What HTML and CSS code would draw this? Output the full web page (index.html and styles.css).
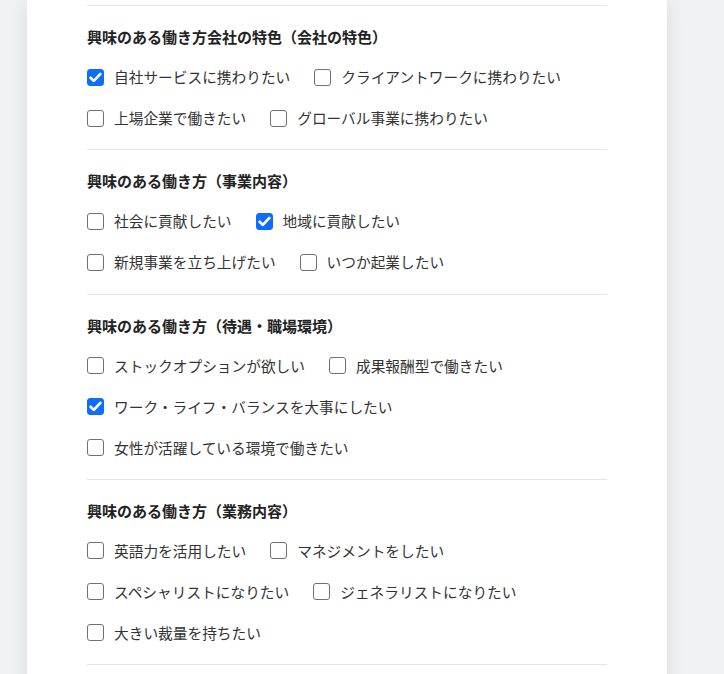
FILE: index.html
```html
<!DOCTYPE html>
<html lang="ja">
<head>
<meta charset="utf-8">
<link rel="stylesheet" href="styles.css">
</head>
<body>
<div class="page">
  <div class="card">
    <section class="group">
      <h3 class="title">興味のある働き方会社の特色（会社の特色）</h3>
      <div class="options">
        <div class="row">
          <label class="opt"><span class="box on"><svg viewBox="0 0 17 17"><path d="M3.6 8.7l3.2 3.2 6.6-7" /></svg></span>自社サービスに携わりたい</label>
          <label class="opt"><span class="box"></span>クライアントワークに携わりたい</label>
        </div>
        <div class="row">
          <label class="opt"><span class="box"></span>上場企業で働きたい</label>
          <label class="opt"><span class="box"></span>グローバル事業に携わりたい</label>
        </div>
      </div>
    </section>
    <section class="group">
      <h3 class="title">興味のある働き方（事業内容）</h3>
      <div class="options">
        <div class="row">
          <label class="opt"><span class="box"></span>社会に貢献したい</label>
          <label class="opt"><span class="box on"><svg viewBox="0 0 17 17"><path d="M3.6 8.7l3.2 3.2 6.6-7" /></svg></span>地域に貢献したい</label>
        </div>
        <div class="row">
          <label class="opt"><span class="box"></span>新規事業を立ち上げたい</label>
          <label class="opt"><span class="box"></span>いつか起業したい</label>
        </div>
      </div>
    </section>
    <section class="group">
      <h3 class="title">興味のある働き方（待遇・職場環境）</h3>
      <div class="options">
        <div class="row">
          <label class="opt"><span class="box"></span>ストックオプションが欲しい</label>
          <label class="opt"><span class="box"></span>成果報酬型で働きたい</label>
        </div>
        <div class="row">
          <label class="opt"><span class="box on"><svg viewBox="0 0 17 17"><path d="M3.6 8.7l3.2 3.2 6.6-7" /></svg></span>ワーク・ライフ・バランスを大事にしたい</label>
        </div>
        <div class="row">
          <label class="opt"><span class="box"></span>女性が活躍している環境で働きたい</label>
        </div>
      </div>
    </section>
    <section class="group">
      <h3 class="title">興味のある働き方（業務内容）</h3>
      <div class="options">
        <div class="row">
          <label class="opt"><span class="box"></span>英語力を活用したい</label>
          <label class="opt"><span class="box"></span>マネジメントをしたい</label>
        </div>
        <div class="row">
          <label class="opt"><span class="box"></span>スペシャリストになりたい</label>
          <label class="opt"><span class="box"></span>ジェネラリストになりたい</label>
        </div>
        <div class="row">
          <label class="opt"><span class="box"></span>大きい裁量を持ちたい</label>
        </div>
      </div>
    </section>
    <section class="group end"></section>
  </div>
</div>
</body>
</html>
```

FILE: styles.css
```css
html, body {
  margin: 0;
  padding: 0;
  height: 100%;
  overflow: hidden;
}
body {
  background: #f1f2f4;
  font-family: "Noto Sans CJK JP", "Noto Sans", sans-serif;
  color: #333;
}
.page {
  padding-left: 27px;
}
.card {
  width: 520px;
  padding: 5px 60px 0;
  background: #fff;
  box-shadow: 0 0 22px rgba(0, 0, 0, 0.09);
  min-height: 800px;
}
.group {
  border-top: 1px solid #e6e6e6;
  padding: 20px 0 19.3px;
}
.title {
  margin: 0;
  font-size: 15px;
  line-height: 22px;
  font-weight: 700;
  color: #222;
}
.options {
  margin-top: 17px;
  display: flex;
  flex-direction: column;
  gap: 17px;
}
.row {
  display: flex;
  gap: 24px;
}
.opt {
  display: flex;
  align-items: center;
  gap: 10px;
  font-size: 14.7px;
  line-height: 24px;
  color: #333;
}
.box {
  width: 17px;
  height: 17px;
  box-sizing: border-box;
  border: 1px solid #707070;
  border-radius: 3px;
  background: #fff;
  position: relative;
  flex-shrink: 0;
}
.box.on {
  background: #0d6efd;
  border-color: #0d6efd;
}
.box svg {
  position: absolute;
  left: -1px;
  top: -1px;
  width: 17px;
  height: 17px;
}
.box path {
  fill: none;
  stroke: #fff;
  stroke-width: 2.7;
  stroke-linecap: round;
  stroke-linejoin: round;
}
```
